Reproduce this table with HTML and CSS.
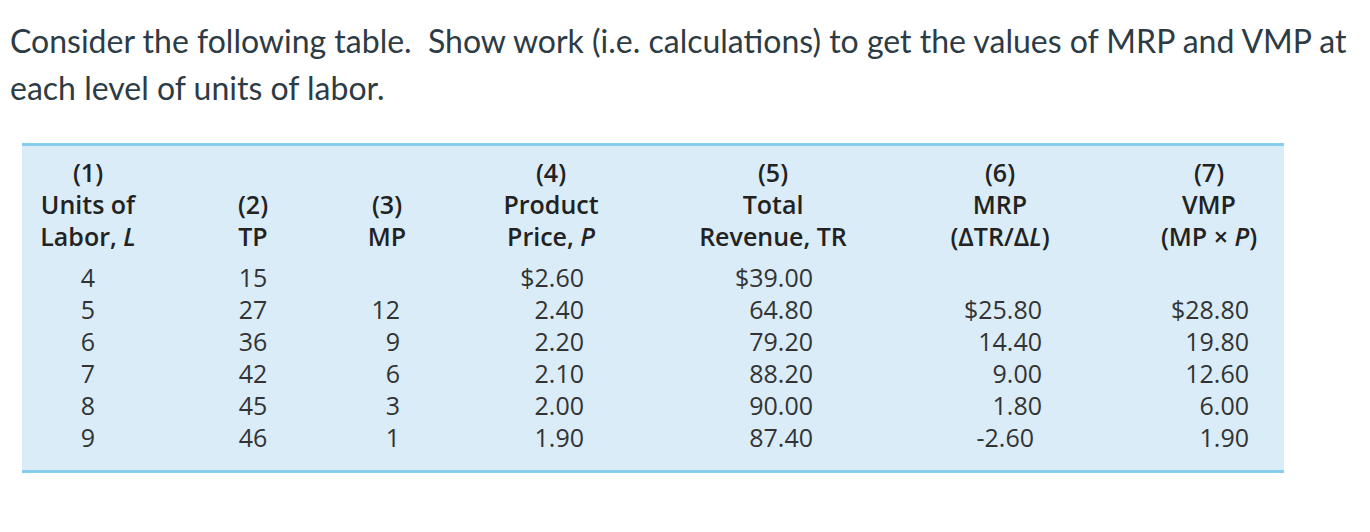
FILE: index.html
```html
<!DOCTYPE html>
<html lang="en">
<head>
<meta charset="utf-8">
<title>MRP and VMP table</title>
<link rel="stylesheet" href="styles.css">
</head>
<body>
<div class="page">
  <p class="question">Consider the following table.&nbsp; Show work (i.e. calculations) to get the values of MRP and VMP at each level of units of labor.</p>
  <table class="data">
    <colgroup>
      <col class="w1"><col class="w2"><col class="w3"><col class="w4"><col class="w5"><col class="w6"><col class="w7">
    </colgroup>
    <thead>
      <tr>
        <th>(1)<br>Units of<br>Labor, <i>L</i></th>
        <th>(2)<br>TP</th>
        <th>(3)<br>MP</th>
        <th>(4)<br>Product<br>Price, <i>P</i></th>
        <th>(5)<br>Total<br>Revenue, TR</th>
        <th>(6)<br>MRP<br>(ΔTR/Δ<i>L</i>)</th>
        <th>(7)<br>VMP<br>(MP × <i>P</i>)</th>
      </tr>
    </thead>
    <tbody>
      <tr><td class="c">4</td><td class="c">15</td><td class="r3"></td><td class="r4">$2.60</td><td class="r5">$39.00</td><td class="r6"></td><td class="r7"></td></tr>
      <tr><td class="c">5</td><td class="c">27</td><td class="r3">12</td><td class="r4">2.40</td><td class="r5">64.80</td><td class="r6">$25.80</td><td class="r7">$28.80</td></tr>
      <tr><td class="c">6</td><td class="c">36</td><td class="r3">9</td><td class="r4">2.20</td><td class="r5">79.20</td><td class="r6">14.40</td><td class="r7">19.80</td></tr>
      <tr><td class="c">7</td><td class="c">42</td><td class="r3">6</td><td class="r4">2.10</td><td class="r5">88.20</td><td class="r6">9.00</td><td class="r7">12.60</td></tr>
      <tr><td class="c">8</td><td class="c">45</td><td class="r3">3</td><td class="r4">2.00</td><td class="r5">90.00</td><td class="r6">1.80</td><td class="r7">6.00</td></tr>
      <tr class="last"><td class="c">9</td><td class="c">46</td><td class="r3">1</td><td class="r4">1.90</td><td class="r5">87.40</td><td class="r6 neg">-2.60</td><td class="r7">1.90</td></tr>
    </tbody>
  </table>
</div>
</body>
</html>
```
FILE: styles.css
```css
html, body {
  margin: 0;
  padding: 0;
  background: #ffffff;
}

.page {
  padding: 17px 10px 0 10px;
}

.question {
  margin: 0;
  font-family: Lato, "Liberation Sans", sans-serif;
  font-size: 32px;
  line-height: 47px;
  color: #2d3b45;
}

.data {
  margin: 32px 0 0 12px;
  width: 1262px;
  table-layout: fixed;
  border-collapse: collapse;
  background: #d9ecf8;
  border-top: 3px solid #86cdf0;
  border-bottom: 3px solid #86cdf0;
  font-family: "Open Sans", "Liberation Sans", sans-serif;
  font-size: 25px;
  line-height: 32px;
  color: #333333;
}

.w1 { width: 132px; }
.w2 { width: 198px; }
.w3 { width: 70px; }
.w4 { width: 258px; }
.w5 { width: 186px; }
.w6 { width: 268px; }
.w7 { width: 150px; }

.data th {
  font-weight: 600;
  color: #222222;
  text-align: center;
  vertical-align: bottom;
  padding: 10px 0 9px 0;
  white-space: nowrap;
}

.data td {
  padding: 0;
  height: 32px;
  white-space: nowrap;
}

.data tr.last td {
  padding-bottom: 17px;
}

.c { text-align: center; }
.r3 { text-align: right; padding-right: 22px !important; }
.r4 { text-align: right; padding-right: 96px !important; }
.r5 { text-align: right; padding-right: 53px !important; }
.r6 { text-align: right; padding-right: 92px !important; }
.r7 { text-align: right; padding-right: 35px !important; }
.r6.neg { padding-right: 100px !important; }
```
